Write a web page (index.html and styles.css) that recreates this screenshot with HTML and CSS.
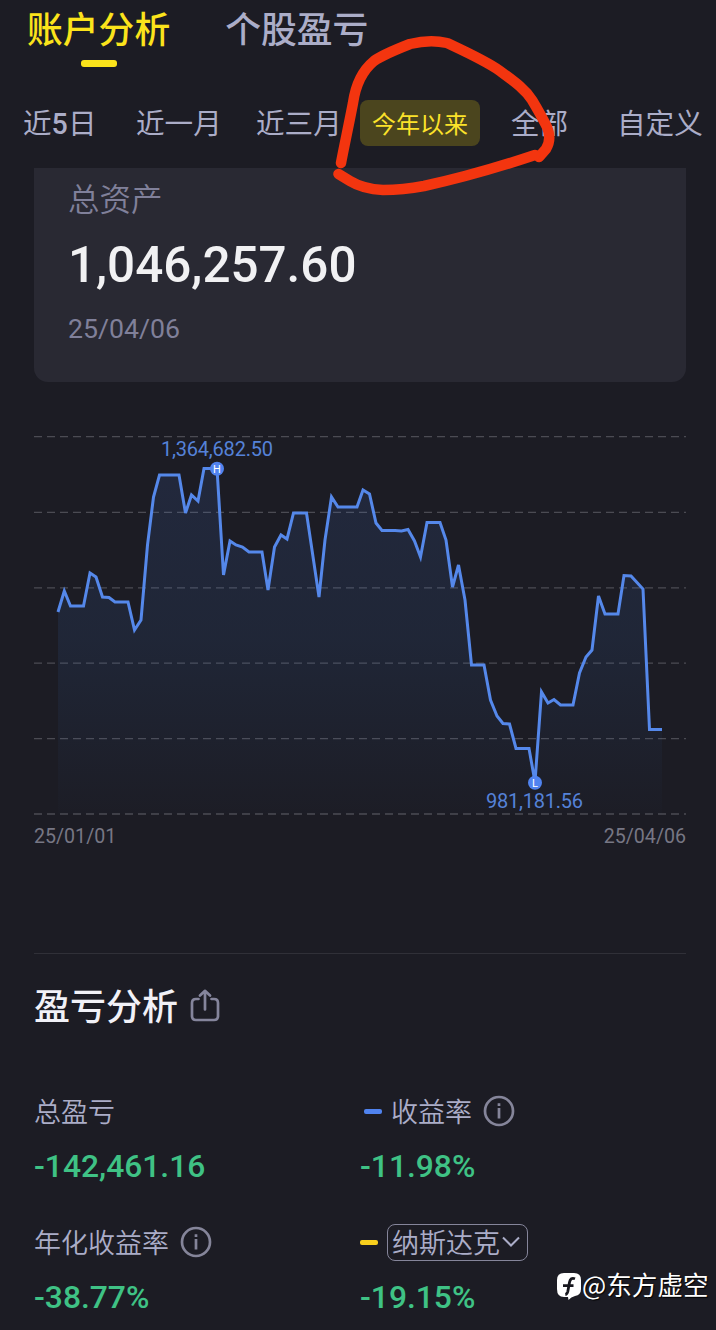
FILE: index.html
```html
<!DOCTYPE html>
<html lang="zh-CN">
<head>
<meta charset="utf-8">
<title>账户分析</title>
<link rel="stylesheet" href="styles.css">
</head>
<body>
<main class="screen">
  <nav class="tabs">
    <a class="tab tab-active">账户分析</a>
    <a class="tab">个股盈亏</a>
  </nav>
  <div class="periods">
    <span class="period p-5d">近<b>5</b>日</span>
    <span class="period p-1m">近一月</span>
    <span class="period p-3m">近三月</span>
    <span class="pill">今年以来</span>
    <span class="period p-all">全部</span>
    <span class="period">自定义</span>
  </div>
  <section class="card">
    <div class="card-label">总资产</div>
    <div class="card-value">1,046,257.60</div>
    <div class="card-date">25/04/06</div>
  </section>
  <section class="chart">
    <svg class="plot" width="716" height="400" viewBox="0 420 716 400">
      <defs>
        <linearGradient id="fill" x1="0" y1="468" x2="0" y2="814" gradientUnits="userSpaceOnUse">
          <stop offset="0" stop-color="#4f83f0" stop-opacity=".12"/>
          <stop offset=".5" stop-color="#4081e0" stop-opacity=".1"/>
          <stop offset="1" stop-color="#4081e0" stop-opacity=".01"/>
        </linearGradient>
      </defs>
      <path class="grid" d="M34 436.7H686M34 512.4H686M34 587.8H686M34 663.2H686M34 738.7H686M34 814H686"/>
      <path fill="url(#fill)" d="M58 612L64.3 591 70.5 606H83.5L90 573 96 577 102.5 597 109 597.5 115 602H128L134.5 630 141 620 147.5 545 153.5 497 159.5 475H179L185.5 513 191.5 495 198 501 204 468.5H217L223.5 575 230 541 236 545 242.5 547 249 552H262L268 590 274.5 547 281 535 287 539 293.5 513H306.5L319 597 325 540 331.5 497 338 507H357L363 490 369.5 494 376 523 382 530.5H395L401.5 531 408 529.5 414.5 541 420.5 557 427 522.5H440L446 540 452.5 587 458.5 565 465 600 471.5 665H484L490.5 700 497 716 503 723.5 509.5 724 516 748.5H529L535 782 541.5 692 548 703 554 699.5 560.5 705H573L579.5 673 586 657 592 650 598.5 596 605 614H618L624 575.5 631 576 643 589 649.5 729.5H662V814H58Z"/>
      <path class="line" d="M58 612L64.3 591 70.5 606H83.5L90 573 96 577 102.5 597 109 597.5 115 602H128L134.5 630 141 620 147.5 545 153.5 497 159.5 475H179L185.5 513 191.5 495 198 501 204 468.5H217L223.5 575 230 541 236 545 242.5 547 249 552H262L268 590 274.5 547 281 535 287 539 293.5 513H306.5L319 597 325 540 331.5 497 338 507H357L363 490 369.5 494 376 523 382 530.5H395L401.5 531 408 529.5 414.5 541 420.5 557 427 522.5H440L446 540 452.5 587 458.5 565 465 600 471.5 665H484L490.5 700 497 716 503 723.5 509.5 724 516 748.5H529L535 782 541.5 692 548 703 554 699.5 560.5 705H573L579.5 673 586 657 592 650 598.5 596 605 614H618L624 575.5 631 576 643 589 649.5 729.5H662"/>
      <circle class="dot" cx="217" cy="468.7" r="7"/>
      <text class="mark" x="217" y="472.7">H</text>
      <text class="peak" x="217" y="456.3" textLength="112">1,364,682.50</text>
      <circle class="dot" cx="535" cy="782.7" r="7"/>
      <text class="mark" x="535" y="786.7">L</text>
      <text class="peak" x="534.5" y="808.3" textLength="97">981,181.56</text>
    </svg>
    <div class="axis"><span>25/01/01</span><span>25/04/06</span></div>
  </section>
  <section class="analysis">
    <h2 class="heading"><span>盈亏分析</span>
      <svg class="share" width="30" height="34" viewBox="0 0 30 34"><path d="M8.5 10H6Q2 10 2 14V27Q2 31 6 31H24Q28 31 28 27V14Q28 10 24 10H21.5M15 20.5V2.5M10 6.5L15 1.8 20 6.5"/></svg>
    </h2>
    <div class="stats">
      <div class="stat">
        <div class="label"><span>总盈亏</span></div>
        <div class="value">-142,461.16</div>
      </div>
      <div class="stat">
        <div class="label"><i class="dash dash-blue"></i><span>收益率</span>
          <svg class="info" width="32" height="32" viewBox="0 0 32 32"><circle cx="16" cy="16" r="14"/><path d="M16 8.3V11M16 13V23.5"/></svg>
        </div>
        <div class="value">-11.98%</div>
      </div>
      <div class="stat">
        <div class="label"><span>年化收益率</span>
          <svg class="info" width="32" height="32" viewBox="0 0 32 32"><circle cx="16" cy="16" r="14"/><path d="M16 8.3V11M16 13V23.5"/></svg>
        </div>
        <div class="value">-38.77%</div>
      </div>
      <div class="stat">
        <div class="label"><i class="dash dash-yellow"></i><div class="select"><span>纳斯达克</span><svg class="chevron" width="18" height="12" viewBox="0 0 18 12"><path d="M1 1.5L9 9.5 17 1.5"/></svg></div></div>
        <div class="value">-19.15%</div>
      </div>
    </div>
  </section>
  <svg class="scribble" width="716" height="210" viewBox="0 0 716 210">
    <path d="M341 163C344 147 350 119 353 103Q357 75 374 61Q382 55 410 44Q430 39 447 43C464 51 486 61 500 71C515 82 525 89 532 100Q541 115 547 127Q552 139 546 149L539 157"/>
    <path d="M338.5 174L350 181Q363 189 383 190Q403 190 424 186C461 178 505 165 535 155"/>
  </svg>
  <div class="watermark">
    <svg class="logo" width="26" height="30" viewBox="0 0 26 30"><path class="bubble" d="M8 1H18Q25 1 25 8V17Q25 23 19 24Q15 25 12.5 28L12 25H8Q1 25 1 17V8Q1 1 8 1Z"/><path class="f" d="M19 6.8Q14.5 5 13.5 10.3L11.8 19.5Q11.2 22.2 9.3 22.5M7 13.7H17.5"/></svg><span>@东方虚空</span>
  </div>
</main>
</body>
</html>
```
FILE: styles.css
```css
* { box-sizing: border-box; }
body {
  margin: 0;
  background: #1c1c24;
  color: #abadc8;
  font-family: Roboto, "Noto Sans CJK SC", sans-serif;
}
.screen {
  position: relative;
  width: 716px;
  height: 1330px;
  overflow: hidden;
}
.tabs {
  display: flex;
  gap: 55px;
  height: 82px;
  padding-left: 27px;
}
.tab {
  height: 67px;
  padding-top: 2px;
  font-size: 35.8px;
  font-weight: 500;
  line-height: 58px;
}
.tab-active {
  display: flex;
  flex-direction: column;
  align-items: center;
  color: #fbe31b;
}
.tab-active::after {
  content: "";
  width: 36px;
  height: 7px;
  border-radius: 3px;
  background: #fbe31b;
}
.periods {
  display: flex;
  align-items: center;
  height: 82px;
  padding-left: 23px;
  margin-bottom: 4px;
  font-size: 28.6px;
  white-space: nowrap;
}
.period { padding-bottom: 4px; }
.period b { font-weight: 500; }
.p-5d { width: 113px; }
.p-1m { width: 120px; }
.p-3m { width: 104px; }
.p-all { width: 106px; }
.pill {
  display: flex;
  align-items: center;
  justify-content: center;
  width: 120px;
  height: 46px;
  margin-right: 31px;
  padding-bottom: 2px;
  border-radius: 8px;
  background: #4b451e;
  color: #fbe22a;
  font-size: 24px;
}
.card {
  height: 214px;
  margin: 0 30px 0 34px;
  padding: 11px 34px;
  border-radius: 0 0 14px 14px;
  background: #292933;
  color: #80809a;
}
.card-label {
  font-size: 31.5px;
  font-weight: 350;
  line-height: 44px;
}
.card-value {
  margin-top: 13px;
  color: #f1f1f3;
  font-size: 49.4px;
  font-weight: 500;
  line-height: 58px;
}
.card-date {
  margin-top: 18px;
  font-size: 26.7px;
  line-height: 34px;
}
.chart {
  height: 571px;
  padding-top: 38px;
}
.plot { display: block; }
.grid {
  fill: none;
  stroke: #4b4b53;
  stroke-width: 1.3;
  stroke-dasharray: 8 5;
}
.line {
  fill: none;
  stroke: #5588ea;
  stroke-width: 3;
  stroke-linejoin: miter;
}
.dot { fill: #5083ef; }
.mark {
  fill: #fff;
  font-size: 11px;
  text-anchor: middle;
}
.peak {
  fill: #5582d8;
  font-size: 20px;
  text-anchor: middle;
}
.axis {
  display: flex;
  justify-content: space-between;
  padding: 5px 30px 0 34px;
  color: #777784;
  font-size: 19.6px;
  line-height: 24px;
}
.analysis {
  margin: 0 30px 0 34px;
  border-top: 1px solid #303038;
}
.heading {
  display: flex;
  align-items: center;
  gap: 12px;
  height: 104px;
  margin: 0;
  color: #f1f1f7;
  font-size: 36px;
  font-weight: 500;
}
.heading span { padding-bottom: 4px; }
.share {
  fill: none;
  stroke: #85859c;
  stroke-width: 2.7;
  stroke-linecap: round;
  stroke-linejoin: round;
}
.stats {
  display: grid;
  grid-template-columns: 326px 326px;
  grid-auto-rows: 131px;
  padding-top: 31px;
}
.label {
  display: flex;
  align-items: center;
  height: 44px;
  font-size: 27px;
  font-weight: 350;
}
.label span { padding-bottom: 2px; }
.value {
  margin-top: 13px;
  color: #3fc285;
  font-size: 31.8px;
  font-weight: 500;
  line-height: 40px;
}
.info {
  margin-left: 11px;
  fill: none;
  stroke: #85859a;
  stroke-width: 2.7;
}
.dash {
  width: 18px;
  height: 5px;
  border-radius: 2px;
}
.dash-blue {
  margin: 0 9px 0 4px;
  background: #5083ef;
}
.dash-yellow {
  margin-right: 9px;
  background: #f8cf1d;
}
.select {
  display: flex;
  align-items: center;
  width: 141px;
  height: 37px;
  padding-left: 4px;
  border: 1px solid #85859a;
  border-radius: 8px;
}
.chevron {
  margin-left: 2px;
  fill: none;
  stroke: #abadc8;
  stroke-width: 2;
}
.scribble {
  position: absolute;
  top: 0;
  left: 0;
  fill: none;
  stroke: #f3350f;
  stroke-width: 10.5;
  stroke-linecap: round;
  stroke-linejoin: round;
}
.watermark {
  position: absolute;
  top: 1266px;
  left: 556px;
  display: flex;
  align-items: center;
  height: 38px;
  color: #fff;
  font-family: "Noto Sans CJK SC", sans-serif;
  font-size: 25.6px;
  font-weight: 400;
  white-space: nowrap;
  text-shadow: 1px 1px 1px #000;
}
.watermark span { padding-bottom: 4px; }
.logo { margin-top: 4px; }
.bubble { fill: #fff; }
.f {
  fill: none;
  stroke: #17171e;
  stroke-width: 2.8;
}
```
